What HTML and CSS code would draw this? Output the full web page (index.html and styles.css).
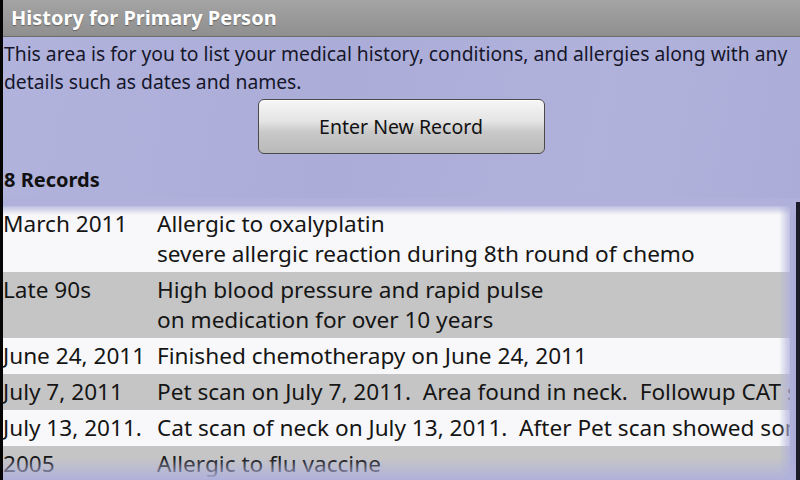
FILE: index.html
```html
<!DOCTYPE html>
<html>
<head>
<meta charset="utf-8">
<link rel="stylesheet" href="styles.css">
</head>
<body>
<div class="app">
  <header class="titlebar">History for Primary Person</header>
  <main class="content">
    <p class="intro">This area is for you to list your medical history, conditions, and allergies along with any details such as dates and names.</p>
    <div class="btn-row"><button class="btn">Enter New Record</button></div>
    <h2 class="count">8 Records</h2>
    <div class="list-wrap">
      <div class="list">
        <div class="row light">
          <div class="date">March 2011</div>
          <div class="desc">Allergic to oxalyplatin<br>severe allergic reaction during 8th round of chemo</div>
        </div>
        <div class="row dark">
          <div class="date">Late 90s</div>
          <div class="desc">High blood pressure and rapid pulse<br>on medication for over 10 years</div>
        </div>
        <div class="row light">
          <div class="date">June 24, 2011</div>
          <div class="desc">Finished chemotherapy on June 24, 2011</div>
        </div>
        <div class="row dark">
          <div class="date">July 7, 2011</div>
          <div class="desc">Pet scan on July 7, 2011.&nbsp; Area found in neck.&nbsp; Followup CAT scan</div>
        </div>
        <div class="row light">
          <div class="date">July 13, 2011.</div>
          <div class="desc">Cat scan of neck on July 13, 2011.&nbsp; After Pet scan showed some</div>
        </div>
        <div class="row dark">
          <div class="date">2005</div>
          <div class="desc">Allergic to flu vaccine</div>
        </div>
      </div>
      <div class="fade-top"></div>
      <div class="fade-bottom"></div>
      <div class="fade-right"></div>
      <div class="scrollbar"></div>
    </div>
  </main>
</div>
</body>
</html>
```
FILE: styles.css
```css
html, body {
  margin: 0;
  padding: 0;
  background: #000;
}
.app {
  width: 797px;
  height: 480px;
  border-left: 3px solid #050505;
  display: flex;
  flex-direction: column;
  overflow: hidden;
  font-family: "Noto Sans", "DejaVu Sans", sans-serif;
  background: #afb1db;
}
.titlebar {
  height: 36px;
  border-bottom: 1px solid #6c6c6c;
  background: linear-gradient(#a4a4a4, #8f8f8f);
  color: #fff;
  font-weight: bold;
  font-size: 20px;
  line-height: 36px;
  padding-left: 8px;
  text-shadow: 0 1px 1px rgba(0,0,0,0.35);
  flex: none;
}
.content {
  flex: 1;
  display: flex;
  flex-direction: column;
  min-height: 0;
  padding-left: 1px;
  background: linear-gradient(100deg, #b1b3dd 0%, #abadd8 40%, #b0b2dc 70%, #aaacd7 100%);
}
.intro {
  margin: 3px 0 0 0;
  font-size: 19.3px;
  line-height: 28px;
  color: #16162a;
  padding-right: 4px;
}
.btn-row {
  display: flex;
  justify-content: center;
  margin-top: 3px;
  padding-right: 2px;
}
.btn {
  width: 287px;
  height: 55px;
  border: 1px solid #4a4a4a;
  border-radius: 6px;
  background: linear-gradient(#f6f6f6 0%, #e4e4e4 40%, #c9c9c9 60%, #b9b9b9 100%);
  box-shadow: inset 0 1px 0 #fff;
  font-family: "Noto Sans", "DejaVu Sans", sans-serif;
  font-size: 19.5px;
  color: #111;
  padding: 0;
}
.count {
  margin: 12px 0 0 0;
  font-size: 20px;
  line-height: 28px;
  font-weight: bold;
  color: #111;
}
.list-wrap {
  position: relative;
  flex: 1;
  min-height: 0;
  overflow: hidden;
  margin-top: 4px;
  margin-left: -1px;
  padding-top: 8px;
}
.list {
  width: 787px;
  overflow: hidden;
}
.row {
  display: flex;
  white-space: nowrap;
  font-size: 22.6px;
  line-height: 30px;
  padding: 3px 0 3px 0;
  color: #151515;
}
.row.light { background: #f8f8fa; }
.row.dark { background: #c5c5c6; }
.date {
  width: 154px;
  flex: none;
}
.desc {
  flex: none;
}
.fade-top {
  position: absolute;
  left: 0;
  right: 0;
  top: 0;
  height: 17px;
  background: linear-gradient(#afb1db 0, #afb1db 6px, rgba(175,177,219,0) 100%);
}
.fade-bottom {
  position: absolute;
  left: 0;
  right: 0;
  bottom: 0;
  height: 22px;
  background: linear-gradient(rgba(175,177,219,0), #afb1db);
}
.fade-right {
  position: absolute;
  top: 0;
  bottom: 0;
  left: 776px;
  width: 14px;
  background: linear-gradient(to right, rgba(175,177,219,0), #afb1db);
}
.scrollbar {
  position: absolute;
  top: 4px;
  bottom: 0;
  right: 0;
  width: 4px;
  background: #1c1c28;
}
```
